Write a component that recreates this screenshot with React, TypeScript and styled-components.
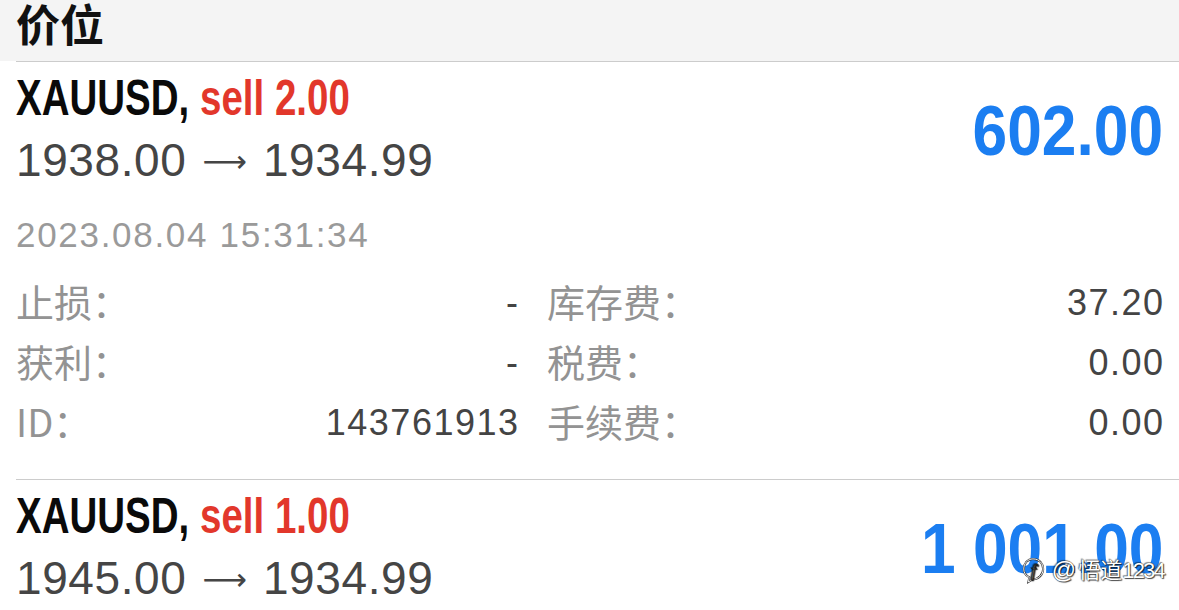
import React from "react";
import styled, { createGlobalStyle } from "styled-components";

const Global = createGlobalStyle`
  html, body { margin: 0; padding: 0; background: #ffffff; overflow: hidden; }
  body { font-family: "Liberation Sans", "Noto Sans CJK SC", sans-serif; -webkit-font-smoothing: antialiased; }
`;

const Page = styled.div`
  position: relative;
  width: 1179px;
  height: 610px;
  overflow: hidden;
  background: #ffffff;
`;

const Header = styled.div`
  background: #f4f4f4;
  height: 61px;
  padding: 0 16px;
  box-sizing: border-box;
`;

const HeaderTitle = styled.h1`
  margin: 0;
  font-family: "Noto Sans CJK SC", sans-serif;
  font-weight: 700;
  font-size: 44px;
  line-height: 46px;
  color: #111111;
`;

const Position = styled.section`
  margin-left: 16px;
  padding-right: 16px;
  border-top: 1px solid #cccccc;
`;

const Summary = styled.div`
  display: flex;
  align-items: flex-start;
  justify-content: space-between;
`;

const SummaryText = styled.div`
  display: flex;
  flex-direction: column;
`;

const Title = styled.div`
  font-family: "Liberation Sans", sans-serif;
  font-weight: 700;
  font-size: 50px;
  line-height: 56px;
  margin-top: 8px;
  color: #0a0a0a;
  white-space: nowrap;
  transform: scaleX(0.77);
  transform-origin: left center;
`;

const Side = styled.span`
  color: #e2372b;
`;

const Prices = styled.div`
  font-family: "Liberation Sans", sans-serif;
  font-size: 46px;
  line-height: 56px;
  margin-top: 6px;
  color: #454545;
  white-space: nowrap;
  letter-spacing: 0.6px;
`;

const Arrow = styled.span`
  font-family: "DejaVu Sans", sans-serif;
  font-size: 31px;
  letter-spacing: 0;
  vertical-align: 4px;
  margin: 0 16px;
`;

const Profit = styled.div`
  font-family: "Liberation Sans", sans-serif;
  font-weight: 700;
  font-size: 70px;
  line-height: 80px;
  margin-top: 29px;
  color: #1b7ef1;
  white-space: nowrap;
  transform: scaleX(0.89);
  transform-origin: right center;
`;

const Time = styled.div`
  font-family: "Liberation Sans", sans-serif;
  font-size: 35px;
  line-height: 40px;
  margin-top: 26px;
  color: #9a9a9a;
  letter-spacing: 1.7px;
`;

const Details = styled.div`
  display: grid;
  grid-template-columns: 502px 1fr;
  column-gap: 29px;
  margin-top: 18px;
  padding-bottom: 26px;
`;

const Field = styled.div`
  display: flex;
  justify-content: space-between;
  align-items: center;
  height: 60px;
`;

const Label = styled.span`
  font-family: "Noto Sans CJK SC", sans-serif;
  font-size: 38px;
  line-height: 60px;
  margin-top: -4px;
  color: #939393;
`;

const Value = styled.span`
  font-family: "Liberation Sans", sans-serif;
  font-size: 36px;
  line-height: 60px;
  color: #444444;
  letter-spacing: 1.5px;
  margin-right: -1.5px;
`;

const Watermark = styled.div`
  position: absolute;
  right: 15px;
  bottom: 24px;
  display: flex;
  align-items: center;
  gap: 7px;
  font-family: "Noto Sans CJK SC", sans-serif;
  font-size: 22px;
  line-height: 30px;
  color: #ffffff;
  text-shadow: 0 0 1px #000, 1px 1px 1px rgba(0, 0, 0, 0.7), -1px -1px 1px rgba(0, 0, 0, 0.4);
`;

const At = styled.span`
  font-family: "Liberation Sans", sans-serif;
  font-size: 24px;
  margin-right: 2px;
`;

const Digits = styled.span`
  font-family: "Liberation Sans", sans-serif;
  font-size: 22px;
  letter-spacing: -1.8px;
`;

const LogoMark = () => (
  <svg width="24" height="30" viewBox="0 0 26 30" aria-hidden="true">
    <path
      d="M13 3 C20 3 24 8 24 14 C24 20 19 25 13 25 L8 28 L9 23 C5 21 3 18 3 14 C3 8 7 3 13 3 Z"
      fill="none"
      stroke="#333"
      strokeWidth="2.2"
    />
    <path
      d="M13 3 C20 3 24 8 24 14 C24 20 19 25 13 25 L8 28 L9 23 C5 21 3 18 3 14 C3 8 7 3 13 3 Z"
      fill="none"
      stroke="#fff"
      strokeWidth="1"
    />
    <text
      x="13.5"
      y="21"
      textAnchor="middle"
      fontFamily="Liberation Serif, serif"
      fontStyle="italic"
      fontSize="19"
      fill="#fff"
      stroke="#222"
      strokeWidth="0.6"
    >
      f
    </text>
  </svg>
);

type Detail = { label: string; value: string };

type Pos = {
  symbol: string;
  side: string;
  open: string;
  current: string;
  profit: string;
  time?: string;
  left?: Detail[];
  right?: Detail[];
};

const positions: Pos[] = [
  {
    symbol: "XAUUSD,",
    side: "sell 2.00",
    open: "1938.00",
    current: "1934.99",
    profit: "602.00",
    time: "2023.08.04 15:31:34",
    left: [
      { label: "止损：", value: "-" },
      { label: "获利：", value: "-" },
      { label: "ID：", value: "143761913" },
    ],
    right: [
      { label: "库存费：", value: "37.20" },
      { label: "税费：", value: "0.00" },
      { label: "手续费：", value: "0.00" },
    ],
  },
  {
    symbol: "XAUUSD,",
    side: "sell 1.00",
    open: "1945.00",
    current: "1934.99",
    profit: "1 001.00",
  },
];

export default function App() {
  return (
    <Page>
      <Global />
      <Header>
        <HeaderTitle>价位</HeaderTitle>
      </Header>
      {positions.map((p, i) => (
        <Position key={i}>
          <Summary>
            <SummaryText>
              <Title>
                {p.symbol} <Side>{p.side}</Side>
              </Title>
              <Prices>
                {p.open}
                <Arrow>⟶</Arrow>
                {p.current}
              </Prices>
            </SummaryText>
            <Profit>{p.profit}</Profit>
          </Summary>
          {p.time && <Time>{p.time}</Time>}
          {p.left && p.right && (
            <Details>
              <div>
                {p.left.map((d) => (
                  <Field key={d.label}>
                    <Label>{d.label}</Label>
                    <Value>{d.value}</Value>
                  </Field>
                ))}
              </div>
              <div>
                {p.right.map((d) => (
                  <Field key={d.label}>
                    <Label>{d.label}</Label>
                    <Value>{d.value}</Value>
                  </Field>
                ))}
              </div>
            </Details>
          )}
        </Position>
      ))}
      <Watermark>
        <LogoMark />
        <span>
          <At>@</At>悟道<Digits>1234</Digits>
        </span>
      </Watermark>
    </Page>
  );
}
